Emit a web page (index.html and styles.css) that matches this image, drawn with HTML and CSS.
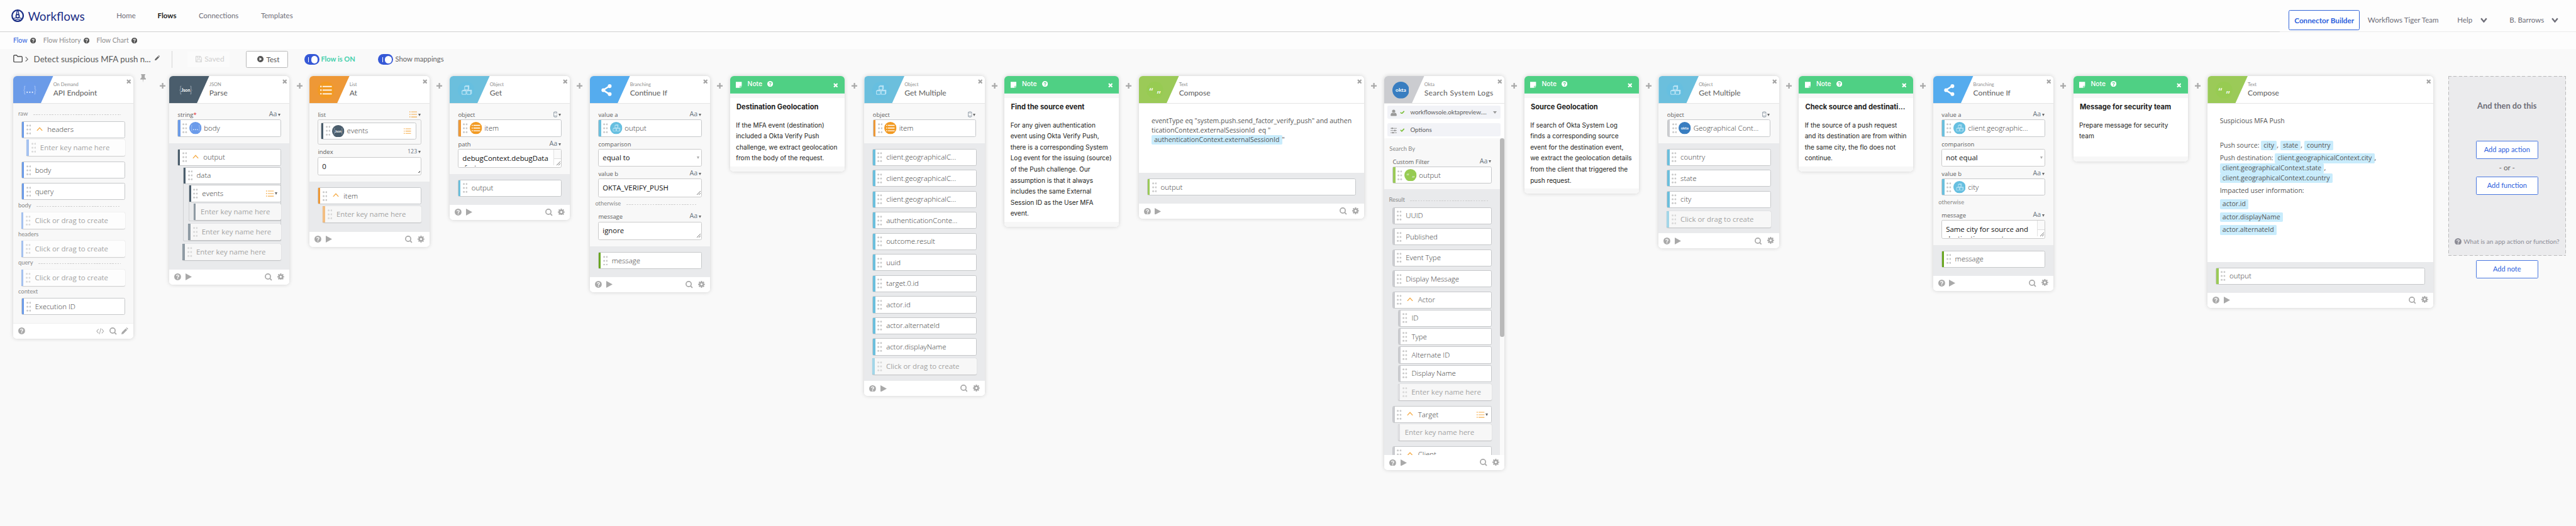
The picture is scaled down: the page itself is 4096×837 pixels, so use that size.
FILE: index.html
```html
<!DOCTYPE html>
<html lang="en">
<head>
<meta charset="utf-8">
<title>Workflows</title>
<link rel="stylesheet" href="styles.css">
</head>
<body>
<svg class="defs" width="0" height="0" aria-hidden="true">
  <symbol id="dots" viewBox="0 0 9 19"><g fill="#c9c9c9"><circle cx="1.9" cy="2.1" r="1.8"/><circle cx="7.2" cy="2.1" r="1.8"/><circle cx="1.9" cy="9.5" r="1.8"/><circle cx="7.2" cy="9.5" r="1.8"/><circle cx="1.9" cy="16.9" r="1.8"/><circle cx="7.2" cy="16.9" r="1.8"/></g></symbol>
  <symbol id="up" viewBox="0 0 12 8"><path d="M1 7 6 1.5 11 7" fill="none" stroke="#f6ae4c" stroke-width="1.7"/></symbol>
  <symbol id="list" viewBox="0 0 15 12"><path d="M3.5 1.2H15M3.5 6H15M3.5 10.8H15" stroke="#f6ae4c" stroke-width="1.4"/><path d="M0 1.2h1.8M0 6h1.8M0 10.8h1.8" stroke="#f6ae4c" stroke-width="1.8"/></symbol>
  <symbol id="obj" viewBox="0 0 8 12"><path d="M.7 2.2C.7.3 7.3.3 7.3 2.2V9.800C7.300 11.700.7 11.700.7 9.800ZM.7 2.400C1.500 3.600 6.500 3.600 7.300 2.400M.7 9.200H7.300" fill="none" stroke="#8b97a3" stroke-width="1"/></symbol>
  <symbol id="q" viewBox="0 0 14 14"><circle cx="7" cy="7" r="7" fill="currentColor"/><path d="M4.700 5.600C4.700 2.500 9.400 2.700 9.300 5.400 9.200 7 7.100 6.900 7.100 8.600" fill="none" stroke="var(--qbg,#fff)" stroke-width="1.7"/><circle cx="7.100" cy="10.700" r="1.100" fill="var(--qbg,#fff)"/></symbol>
  <symbol id="play" viewBox="0 0 12 13"><path d="M0 0 12 6.500 0 13Z" fill="#a9a9a9"/></symbol>
  <symbol id="mag" viewBox="0 0 14 14"><circle cx="6" cy="6" r="4.900" fill="none" stroke="#a9a9a9" stroke-width="2"/><path d="M9.500 9.500 13.200 13.300" stroke="#a9a9a9" stroke-width="2.200"/></symbol>
  <symbol id="gear" viewBox="0 0 14 14"><circle cx="7" cy="7" r="3.600" fill="none" stroke="#a9a9a9" stroke-width="3"/><path d="M7 0V2.500M7 11.500V14M0 7H2.500M11.500 7H14M2 2 3.800 3.800M10.200 10.200 12 12M12 2 10.200 3.800M3.800 10.200 2 12" stroke="#a9a9a9" stroke-width="2.600"/></symbol>
  <symbol id="x" viewBox="0 0 10 10"><path d="M1.300 1.300 8.700 8.700M8.700 1.300 1.300 8.700" stroke="currentColor" stroke-width="2.800"/></symbol>
  <symbol id="plus" viewBox="0 0 11 11"><path d="M5.500 0V11M0 5.500H11" stroke="#a9a9a9" stroke-width="2.700"/></symbol>
  <symbol id="pencil" viewBox="0 0 12 12"><path d="M0 12 .8 8.600 7.500 1.900 10.100 4.500 3.400 11.200ZM8.300 1.100 9.400 0 12 2.600 10.900 3.700Z" fill="currentColor"/></symbol>
  <symbol id="note" viewBox="0 0 12 12"><path d="M0 0H12V8H8V12H0Z" fill="#fff"/><path d="M9 12V9H12Z" fill="#fff"/></symbol>
  <symbol id="chev" viewBox="0 0 13 10"><path d="M1.300 1.500 6.500 7.800 11.700 1.500" fill="none" stroke="#6e6e78" stroke-width="2.800"/></symbol>
  <symbol id="i-list" viewBox="0 0 32 32"><circle cx="16" cy="16" r="16" fill="#f29a22"/><path d="M9.500 9H27M9.500 16H27M9.500 23H27" stroke="#fff" stroke-width="2.100"/><path d="M5 9h2.600M5 16h2.600M5 23h2.600" stroke="#fff" stroke-width="2.600"/></symbol>
  <symbol id="i-obj" viewBox="0 0 32 32"><circle cx="16" cy="16" r="16" fill="#66bfe0"/><path d="M8 17.500H15.500V24H8ZM17 17.500H24.500V24H17ZM13 9H19.500V15.500H13ZM8 17.500 9.500 16H17M17 17.500 18.500 16H26V22.500L24.500 24M24.500 17.500 26 16M13 9 14.500 7.500H21V14L19.500 15.500M19.500 9 21 7.500" fill="none" stroke="#d6f0fb" stroke-width="1"/></symbol>
  <symbol id="i-json" viewBox="0 0 32 32"><circle cx="16" cy="16" r="16" fill="#4a5d6c"/><path d="M7.500 8.500H6V14.500L4.500 16 6 17.500V23.500H7.500M24.500 8.500H26V14.500L27.500 16 26 17.500V23.500H24.500" fill="none" stroke="#a9b4bd" stroke-width="1"/><text x="16" y="19" text-anchor="middle" font-size="8.500" font-weight="700" fill="#fff" class="st">Json</text></symbol>
  <symbol id="i-api" viewBox="0 0 32 32"><circle cx="16" cy="16" r="16" fill="#6b9bea"/><path d="M7.500 8.500H6V14.500L4.500 16 6 17.500V23.500H7.500M24.500 8.500H26V14.500L27.500 16 26 17.500V23.500H24.500" fill="none" stroke="#b9d0f6" stroke-width="1"/><g fill="#fff"><circle cx="11" cy="20" r="1.200"/><circle cx="16" cy="20" r="1.200"/><circle cx="21" cy="20" r="1.200"/></g></symbol>
  <symbol id="i-text" viewBox="0 0 32 32"><circle cx="16" cy="16" r="16" fill="#97cb52"/><text x="9" y="26" text-anchor="middle" font-size="20" fill="#fff" class="sq">“</text><text x="23.500" y="32" text-anchor="middle" font-size="20" fill="#fff" class="sq">”</text></symbol>
  <symbol id="i-okta" viewBox="0 0 32 32"><circle cx="16" cy="16" r="16" fill="#387dc0"/><text x="16" y="19.500" text-anchor="middle" font-size="10" font-weight="700" fill="#fff" class="st">okta</text></symbol>
  <symbol id="i-branch" viewBox="0 0 32 32"><path d="M22 8 9.500 16 22 24" fill="none" stroke="#fff" stroke-width="3"/><circle cx="22" cy="8.500" r="3.600" fill="#fff"/><circle cx="10" cy="16" r="3.600" fill="#fff"/><circle cx="22" cy="23.500" r="3.600" fill="#fff"/></symbol>
</svg>

<div class="app">
<header class="top">
  <svg class="logo" viewBox="0 0 24 24"><g fill="none" stroke="#1b2f86"><circle cx="12" cy="12" r="10.600" stroke-width="2.700"/><circle cx="12" cy="12.800" r="3.100" stroke-width="2"/><path d="M12 1.500C9.500 3.500 11.500 5 9.300 10.500M12 1.500C14.500 3.500 12.500 5 14.700 10.500M9.500 15C7.500 17.500 5.500 15.500 3.500 18M14.500 15C16.500 17.500 18.500 15.500 20.500 18M7 20.500C9.500 18 14.500 18 17 20.500" stroke-width="1.600"/></g></svg>
  <span class="brand">Workflows</span>
  <nav class="nav"><span class="n1">Home</span><span class="n2">Flows</span><span class="n3">Connections</span><span class="n4">Templates</span></nav>
  <div class="tr">
    <span class="cb">Connector Builder</span><span class="org">Workflows Tiger Team</span><span class="help">Help</span><svg class="chev c1"><use href="#chev"/></svg><span class="user">B. Barrows</span><svg class="chev"><use href="#chev"/></svg>
  </div>
</header>
<div class="tabs"><span class="t1">Flow</span><svg><use href="#q"/></svg><span class="t2">Flow History</span><svg><use href="#q"/></svg><span class="t3">Flow Chart</span><svg><use href="#q"/></svg></div>
<div class="bar">
  <svg class="folder" viewBox="0 0 18 15"><path d="M1 2.500Q1 1 2.500 1H6.500L8.500 3.500H15.500Q17 3.500 17 5V12.500Q17 14 15.500 14H2.500Q1 14 1 12.500Z" fill="none" stroke="#333" stroke-width="1.400"/></svg>
  <svg class="gt" viewBox="0 0 6 10"><path d="M.8.8 5 5 .8 9.200" fill="none" stroke="#666" stroke-width="1.300"/></svg>
  <span class="title">Detect suspicious MFA push n...</span>
  <svg class="pen"><use href="#pencil"/></svg>
  <i class="vr"></i>
  <span class="saved"><svg viewBox="0 0 12 12"><path d="M.6.600H9L11.400 3V11.400H.6ZM3 .6V4H8.500V.6M2.600 11.400V7H9.400V11.400M7 1.500V3" fill="none" stroke="#cfcfcf" stroke-width="1.100"/></svg><b>Saved</b></span>
  <span class="test"><svg viewBox="0 0 12 12"><circle cx="6" cy="6" r="6" fill="#555"/><path d="M4.200 3 9 6 4.200 9Z" fill="#fff"/></svg><b>Test</b></span>
  <span class="tog"><i></i><u></u></span><span class="on">Flow is ON</span>
  <span class="tog t"><i></i><u></u></span><span class="map">Show mappings</span>
</div>

<main class="flow">
<section class="card api">
  <div class="hd"><div class="ic"><svg><use href="#i-api"/></svg></div><div class="tt"><small>On Demand</small><h2>API Endpoint</h2></div><svg class="cl"><use href="#x"/></svg></div>
  <div class="out plain">
    <div class="sec s0"><span>raw</span><i></i></div>
    <div class="it"><svg class="d"><use href="#dots"/></svg><svg class="up"><use href="#up"/></svg><span>headers</span></div>
    <div class="ph k"><svg class="d"><use href="#dots"/></svg><span>Enter key name here</span></div>
    <div class="it g1"><svg class="d"><use href="#dots"/></svg><span>body</span></div>
    <div class="it g2"><svg class="d"><use href="#dots"/></svg><span>query</span></div>
    <div class="sec"><span>body</span><i></i></div>
    <div class="ph"><svg class="d"><use href="#dots"/></svg><span>Click or drag to create</span></div>
    <div class="sec"><span>headers</span><i></i></div>
    <div class="ph"><svg class="d"><use href="#dots"/></svg><span>Click or drag to create</span></div>
    <div class="sec"><span>query</span><i></i></div>
    <div class="ph"><svg class="d"><use href="#dots"/></svg><span>Click or drag to create</span></div>
    <div class="sec"><span>context</span><i></i></div>
    <div class="it"><svg class="d"><use href="#dots"/></svg><span>Execution ID</span></div>
  </div>
  <div class="ft"><svg class="q"><use href="#q"/></svg><svg class="code" viewBox="0 0 15 12"><path d="M4.500 2 1 6 4.500 10M10.500 2 14 6 10.500 10M8.800.5 6.200 11.500" fill="none" stroke="#a9a9a9" stroke-width="1.200"/></svg><svg class="mag"><use href="#mag"/></svg><svg class="pc"><use href="#pencil"/></svg></div>
</section>
<div class="gap first"><svg class="pin" viewBox="0 0 11 16"><path d="M1.500 0H9.500V1.800H8.500V6.500Q11 7.500 11 10H6.100L5.500 16 4.900 10H0Q0 7.500 2.500 6.500V1.800H1.500Z" fill="#a9a9a9"/></svg><svg class="p"><use href="#plus"/></svg></div>

<section class="card json">
  <div class="hd"><div class="ic"><svg><use href="#i-json"/></svg></div><div class="tt"><small>JSON</small><h2>Parse</h2></div><svg class="cl"><use href="#x"/></svg></div>
  <div class="in">
    <div class="lb"><span>string<em>*</em></span><b>Aa</b></div>
    <div class="it c-api"><svg class="d"><use href="#dots"/></svg><svg class="ci"><use href="#i-api"/></svg><span>body</span></div>
  </div>
  <div class="out tall">
    <div class="it"><svg class="d"><use href="#dots"/></svg><svg class="up"><use href="#up"/></svg><span>output</span></div>
    <div class="nest">
      <div class="it"><svg class="d"><use href="#dots"/></svg><span>data</span></div>
      <div class="nest">
        <div class="it"><svg class="d"><use href="#dots"/></svg><span>events</span><svg class="ls r"><use href="#list"/></svg><i class="dn"></i></div>
        <div class="ph k nd"><span>Enter key name here</span></div>
      </div>
      <div class="ph k"><svg class="d"><use href="#dots"/></svg><span>Enter key name here</span></div>
    </div>
    <div class="ph k k4"><svg class="d"><use href="#dots"/></svg><span>Enter key name here</span></div>
  </div>
  <div class="ft"><svg class="q"><use href="#q"/></svg><svg class="play"><use href="#play"/></svg><svg class="mag"><use href="#mag"/></svg><svg class="gear"><use href="#gear"/></svg></div>
</section>
<div class="gap"><svg class="p"><use href="#plus"/></svg></div>

<section class="card list">
  <div class="hd"><div class="ic"><svg><use href="#i-list"/></svg></div><div class="tt"><small>List</small><h2>At</h2></div><svg class="cl"><use href="#x"/></svg></div>
  <div class="in">
    <div class="lb"><span>list</span><svg class="ls"><use href="#list"/></svg></div>
    <div class="lbox"><div class="it c-json"><svg class="d"><use href="#dots"/></svg><svg class="ci"><use href="#i-json"/></svg><span>events</span><svg class="ls r r2"><use href="#list"/></svg></div></div>
    <div class="lb n"><span>index</span><b class="num">123</b></div>
    <div class="ta"><span>0</span></div>
  </div>
  <div class="out low">
    <div class="it"><svg class="d"><use href="#dots"/></svg><svg class="up"><use href="#up"/></svg><span>item</span></div>
    <div class="ph k"><svg class="d"><use href="#dots"/></svg><span>Enter key name here</span></div>
  </div>
  <div class="ft"><svg class="q"><use href="#q"/></svg><svg class="play"><use href="#play"/></svg><svg class="mag"><use href="#mag"/></svg><svg class="gear"><use href="#gear"/></svg></div>
</section>
<div class="gap"><svg class="p"><use href="#plus"/></svg></div>

<section class="card obj">
  <div class="hd"><div class="ic"><svg><use href="#i-obj"/></svg></div><div class="tt"><small>Object</small><h2>Get</h2></div><svg class="cl"><use href="#x"/></svg></div>
  <div class="in">
    <div class="lb"><span>object</span><svg class="ob"><use href="#obj"/></svg></div>
    <div class="it c-list"><svg class="d"><use href="#dots"/></svg><svg class="ci"><use href="#i-list"/></svg><span>item</span></div>
    <div class="lb n"><span>path</span><b>Aa</b></div>
    <div class="ta sc"><span>debugContext.debugData<br>.factor</span><i></i></div>
  </div>
  <div class="out">
    <div class="it"><svg class="d"><use href="#dots"/></svg><span>output</span></div>
  </div>
  <div class="ft"><svg class="q"><use href="#q"/></svg><svg class="play"><use href="#play"/></svg><svg class="mag"><use href="#mag"/></svg><svg class="gear"><use href="#gear"/></svg></div>
</section>
<div class="gap"><svg class="p"><use href="#plus"/></svg></div>

<section class="card br">
  <div class="hd"><div class="ic"><svg><use href="#i-branch"/></svg></div><div class="tt"><small>Branching</small><h2>Continue If</h2></div><svg class="cl"><use href="#x"/></svg></div>
  <div class="in">
    <div class="lb"><span>value a</span><b>Aa</b></div>
    <div class="it c-obj"><svg class="d"><use href="#dots"/></svg><svg class="ci"><use href="#i-obj"/></svg><span>output</span></div>
    <div class="lb n nx"><span>comparison</span></div>
    <div class="sel"><span>equal to</span></div>
    <div class="lb n"><span>value b</span><b>Aa</b></div>
    <div class="ta"><span>OKTA_VERIFY_PUSH</span></div>
    <div class="sec so"><span>otherwise</span><i></i></div>
    <div class="lb"><span>message</span><b>Aa</b></div>
    <div class="ta"><span>ignore</span></div>
  </div>
  <div class="out">
    <div class="it c-msg"><svg class="d"><use href="#dots"/></svg><span>message</span></div>
  </div>
  <div class="ft"><svg class="q"><use href="#q"/></svg><svg class="play"><use href="#play"/></svg><svg class="mag"><use href="#mag"/></svg><svg class="gear"><use href="#gear"/></svg></div>
</section>
<div class="gap"><svg class="p"><use href="#plus"/></svg></div>

<section class="card note">
  <div class="nh"><svg class="ni"><use href="#note"/></svg><span>Note</span><svg class="nq"><use href="#q"/></svg><svg class="nx2"><use href="#x"/></svg></div>
  <div class="nb"><h3>Destination Geolocation</h3><p>If the MFA event (destination)<br>included a Okta Verify Push<br>challenge, we extract geolocation<br>from the body of the request.</p></div>
</section>
<div class="gap"><svg class="p"><use href="#plus"/></svg></div>

<section class="card obj">
  <div class="hd"><div class="ic"><svg><use href="#i-obj"/></svg></div><div class="tt"><small>Object</small><h2>Get Multiple</h2></div><svg class="cl"><use href="#x"/></svg></div>
  <div class="in">
    <div class="lb"><span>object</span><svg class="ob"><use href="#obj"/></svg></div>
    <div class="it c-list"><svg class="d"><use href="#dots"/></svg><svg class="ci"><use href="#i-list"/></svg><span>item</span></div>
  </div>
  <div class="out multi">
    <div class="it"><svg class="d"><use href="#dots"/></svg><span>client.geographicalC...</span></div>
    <div class="it"><svg class="d"><use href="#dots"/></svg><span>client.geographicalC...</span></div>
    <div class="it"><svg class="d"><use href="#dots"/></svg><span>client.geographicalC...</span></div>
    <div class="it"><svg class="d"><use href="#dots"/></svg><span>authenticationConte...</span></div>
    <div class="it"><svg class="d"><use href="#dots"/></svg><span>outcome.result</span></div>
    <div class="it"><svg class="d"><use href="#dots"/></svg><span>uuid</span></div>
    <div class="it"><svg class="d"><use href="#dots"/></svg><span>target.0.id</span></div>
    <div class="it"><svg class="d"><use href="#dots"/></svg><span>actor.id</span></div>
    <div class="it"><svg class="d"><use href="#dots"/></svg><span>actor.alternateId</span></div>
    <div class="it"><svg class="d"><use href="#dots"/></svg><span>actor.displayName</span></div>
    <div class="ph"><svg class="d"><use href="#dots"/></svg><span>Click or drag to create</span></div>
  </div>
  <div class="ft"><svg class="q"><use href="#q"/></svg><svg class="play"><use href="#play"/></svg><svg class="mag"><use href="#mag"/></svg><svg class="gear"><use href="#gear"/></svg></div>
</section>
<div class="gap"><svg class="p"><use href="#plus"/></svg></div>

<section class="card note">
  <div class="nh"><svg class="ni"><use href="#note"/></svg><span>Note</span><svg class="nq"><use href="#q"/></svg><svg class="nx2"><use href="#x"/></svg></div>
  <div class="nb"><h3>Find the source event</h3><p>For any given authentication<br>event using Okta Verify Push,<br>there is a corresponding System<br>Log event for the issuing (source)<br>of the Push challenge. Our<br>assumption is that it always<br>includes the same External<br>Session ID as the User MFA<br>event.</p></div>
</section>
<div class="gap"><svg class="p"><use href="#plus"/></svg></div>

<section class="card text">
  <div class="hd"><div class="ic"><svg><use href="#i-text"/></svg></div><div class="tt"><small>Text</small><h2>Compose</h2></div><svg class="cl"><use href="#x"/></svg></div>
  <div class="comp cm1"><div>eventType eq "system.push.send_factor_verify_push" and authen</div><div>ticationContext.externalSessionId&nbsp; eq "</div><div><mark>authenticationContext.externalSessionId</mark>"</div></div>
  <div class="out">
    <div class="it"><svg class="d"><use href="#dots"/></svg><span>output</span></div>
  </div>
  <div class="ft"><svg class="q"><use href="#q"/></svg><svg class="play"><use href="#play"/></svg><svg class="mag"><use href="#mag"/></svg><svg class="gear"><use href="#gear"/></svg></div>
</section>
<div class="gap"><svg class="p"><use href="#plus"/></svg></div>

<section class="card okta">
  <div class="hd"><div class="ic"><svg><use href="#i-okta"/></svg></div><div class="tt"><small>Okta</small><h2>Search System Logs</h2></div><svg class="cl"><use href="#x"/></svg></div>
  <div class="opts">
    <div class="op"><svg class="oi" viewBox="0 0 13 13"><circle cx="6.500" cy="3.400" r="3.300" fill="#999"/><path d="M1 13Q0 13 .3 10.500 1 6.500 3.800 6.500 6.500 8.300 9.200 6.500 12 6.500 12.700 10.500 13 13 12 13Z" fill="#999"/></svg><svg class="ok" viewBox="0 0 9 7"><path d="M1 3.300 3.500 5.700 8 1" fill="none" stroke="#7cbf3a" stroke-width="2"/></svg><span>workflowsoie.oktapreview....</span><i class="dd"></i></div>
    <div class="op"><svg class="oi" viewBox="0 0 13 13"><path d="M0 2.300H13M0 6.800H13M0 11.300H13" stroke="#8a8a8a" stroke-width="1.100"/><path d="M3.500.8V3.800M9 5.300V8.300M5 9.800V12.800" stroke="#8a8a8a" stroke-width="2.400"/></svg><svg class="ok" viewBox="0 0 9 7"><path d="M1 3.300 3.500 5.700 8 1" fill="none" stroke="#7cbf3a" stroke-width="2"/></svg><span>Options</span></div>
  </div>
  <div class="scroll">
    <div class="pane">
      <div class="in">
        <div class="sec s1"><span>Search By</span><i></i></div>
        <div class="lb"><span>Custom Filter</span><b>Aa</b></div>
        <div class="it c-text"><svg class="d"><use href="#dots"/></svg><svg class="ci"><use href="#i-text"/></svg><span>output</span></div>
      </div>
      <div class="out multi">
        <div class="sec s2"><span>Result</span><i></i></div>
        <div class="it"><svg class="d"><use href="#dots"/></svg><span>UUID</span></div>
        <div class="it"><svg class="d"><use href="#dots"/></svg><span>Published</span></div>
        <div class="it"><svg class="d"><use href="#dots"/></svg><span>Event Type</span></div>
        <div class="it"><svg class="d"><use href="#dots"/></svg><span>Display Message</span></div>
        <div class="it"><svg class="d"><use href="#dots"/></svg><svg class="up"><use href="#up"/></svg><span>Actor</span></div>
        <div class="kids">
          <div class="it"><svg class="d"><use href="#dots"/></svg><span>ID</span></div>
          <div class="it"><svg class="d"><use href="#dots"/></svg><span>Type</span></div>
          <div class="it"><svg class="d"><use href="#dots"/></svg><span>Alternate ID</span></div>
          <div class="it"><svg class="d"><use href="#dots"/></svg><span>Display Name</span></div>
          <div class="ph"><svg class="d"><use href="#dots"/></svg><span>Enter key name here</span></div>
        </div>
        <div class="it t10"><svg class="d"><use href="#dots"/></svg><svg class="up"><use href="#up"/></svg><span>Target</span><svg class="ls r"><use href="#list"/></svg><i class="dn"></i></div>
        <div class="kids"><div class="ph nd"><span>Enter key name here</span></div></div>
        <div class="it t10"><svg class="d"><use href="#dots"/></svg><svg class="up"><use href="#up"/></svg><span>Client</span></div>
      </div>
    </div>
    <div class="sb"><i></i></div>
  </div>
  <div class="ft"><svg class="q"><use href="#q"/></svg><svg class="play"><use href="#play"/></svg><svg class="mag"><use href="#mag"/></svg><svg class="gear"><use href="#gear"/></svg></div>
</section>
<div class="gap"><svg class="p"><use href="#plus"/></svg></div>

<section class="card note">
  <div class="nh"><svg class="ni"><use href="#note"/></svg><span>Note</span><svg class="nq"><use href="#q"/></svg><svg class="nx2"><use href="#x"/></svg></div>
  <div class="nb"><h3>Source Geolocation</h3><p>If search of Okta System Log<br>finds a corresponding source<br>event for the destination event,<br>we extract the geolocation details<br>from the client that triggered the<br>push request.</p></div>
</section>
<div class="gap"><svg class="p"><use href="#plus"/></svg></div>

<section class="card obj">
  <div class="hd"><div class="ic"><svg><use href="#i-obj"/></svg></div><div class="tt"><small>Object</small><h2>Get Multiple</h2></div><svg class="cl"><use href="#x"/></svg></div>
  <div class="in">
    <div class="lb"><span>object</span><svg class="ob"><use href="#obj"/></svg></div>
    <div class="it c-okta"><svg class="d"><use href="#dots"/></svg><svg class="ci"><use href="#i-okta"/></svg><span>Geographical Cont...</span></div>
  </div>
  <div class="out multi">
    <div class="it"><svg class="d"><use href="#dots"/></svg><span>country</span></div>
    <div class="it"><svg class="d"><use href="#dots"/></svg><span>state</span></div>
    <div class="it"><svg class="d"><use href="#dots"/></svg><span>city</span></div>
    <div class="ph"><svg class="d"><use href="#dots"/></svg><span>Click or drag to create</span></div>
  </div>
  <div class="ft"><svg class="q"><use href="#q"/></svg><svg class="play"><use href="#play"/></svg><svg class="mag"><use href="#mag"/></svg><svg class="gear"><use href="#gear"/></svg></div>
</section>
<div class="gap"><svg class="p"><use href="#plus"/></svg></div>

<section class="card note">
  <div class="nh"><svg class="ni"><use href="#note"/></svg><span>Note</span><svg class="nq"><use href="#q"/></svg><svg class="nx2"><use href="#x"/></svg></div>
  <div class="nb"><h3>Check source and destinati...</h3><p>If the source of a push request<br>and its destination are from within<br>the same city, the flo does not<br>continue.</p></div>
</section>
<div class="gap"><svg class="p"><use href="#plus"/></svg></div>

<section class="card br">
  <div class="hd"><div class="ic"><svg><use href="#i-branch"/></svg></div><div class="tt"><small>Branching</small><h2>Continue If</h2></div><svg class="cl"><use href="#x"/></svg></div>
  <div class="in">
    <div class="lb"><span>value a</span><b>Aa</b></div>
    <div class="it c-obj"><svg class="d"><use href="#dots"/></svg><svg class="ci"><use href="#i-obj"/></svg><span>client.geographic...</span></div>
    <div class="lb n nx"><span>comparison</span></div>
    <div class="sel"><span>not equal</span></div>
    <div class="lb n"><span>value b</span><b>Aa</b></div>
    <div class="it c-obj"><svg class="d"><use href="#dots"/></svg><svg class="ci"><use href="#i-obj"/></svg><span>city</span></div>
    <div class="sec so"><span>otherwise</span><i></i></div>
    <div class="lb"><span>message</span><b>Aa</b></div>
    <div class="ta sc"><span>Same city for source and<br>destination event</span><i></i></div>
  </div>
  <div class="out">
    <div class="it c-msg"><svg class="d"><use href="#dots"/></svg><span>message</span></div>
  </div>
  <div class="ft"><svg class="q"><use href="#q"/></svg><svg class="play"><use href="#play"/></svg><svg class="mag"><use href="#mag"/></svg><svg class="gear"><use href="#gear"/></svg></div>
</section>
<div class="gap"><svg class="p"><use href="#plus"/></svg></div>

<section class="card note">
  <div class="nh"><svg class="ni"><use href="#note"/></svg><span>Note</span><svg class="nq"><use href="#q"/></svg><svg class="nx2"><use href="#x"/></svg></div>
  <div class="nb n5"><h3>Message for security team</h3><p>Prepare message for security<br>team</p></div>
</section>
<div class="gap"><svg class="p"><use href="#plus"/></svg></div>

<section class="card text">
  <div class="hd"><div class="ic"><svg><use href="#i-text"/></svg></div><div class="tt"><small>Text</small><h2>Compose</h2></div><svg class="cl"><use href="#x"/></svg></div>
  <div class="comp cm2">
    <div class="m1">Suspicious MFA Push</div>
    <div class="m2">Push source: <mark>city</mark>, <mark>state</mark>, <mark>country</mark></div>
    <div class="m3">Push destination: <mark>client.geographicalContext.city</mark>,</div>
    <div><mark>client.geographicalContext.state</mark>,</div>
    <div><mark>client.geographicalContext.country</mark></div>
    <div class="m4">Impacted user information:</div>
    <div class="m5"><mark>actor.id</mark></div>
    <div class="m5"><mark>actor.displayName</mark></div>
    <div class="m5"><mark>actor.alternateId</mark></div>
  </div>
  <div class="out">
    <div class="it"><svg class="d"><use href="#dots"/></svg><span>output</span></div>
  </div>
  <div class="ft"><svg class="q"><use href="#q"/></svg><svg class="play"><use href="#play"/></svg><svg class="mag"><use href="#mag"/></svg><svg class="gear"><use href="#gear"/></svg></div>
</section>

<div class="end">
  <div class="drop">
    <h4>And then do this</h4>
    <span class="btn">Add app action</span>
    <span class="or">- or -</span>
    <span class="btn">Add function</span>
    <span class="what"><svg><use href="#q"/></svg><b>What is an app action or function?</b></span>
  </div>
  <span class="btn an">Add note</span>
</div>
</main>
</div>
</body>
</html>
```

FILE: styles.css
```css
* { box-sizing: border-box; }
body { margin: 0; background: #f9f9f9; overflow: hidden; }
.defs { display: none; }
.app { width: 4886px; height: 998px; zoom: 0.8383; font-family: Lato, sans-serif; color: #666; }
h2, h3, h4, p, small { margin: 0; font-weight: 400; }
svg { display: block; flex: none; }
span, b { white-space: nowrap; }
b { font-weight: 400; }
.st { font-family: Lato, sans-serif; }
.sq { font-family: "Open Sans", sans-serif; }

/* top navigation */
.top { display: flex; height: 61px; background: #fdfdfd; border: solid #d2d2d2; border-width: 0 0 1px; border-image: linear-gradient(90deg, #d2d2d2 88.480%, #ebebeb 88.480%) 1; padding-left: 21px; }
.logo { width: 24px; height: 24px; margin-top: 18px; }
.brand { margin: 15px 0 0 8px; width: 168px; font-size: 22.500px; line-height: 30px; color: #1b2f86; }
.nav { display: flex; font-size: 13.700px; line-height: 20px; padding-top: 20px; color: #6e6e78; }
.n1 { width: 78px; }
.n2 { width: 78px; color: #1d1d21; font-weight: 700; }
.n3 { width: 118px; }
.tr { display: flex; margin-left: auto; padding: 19px 33px 0 0; font-size: 13.800px; line-height: 38px; color: #6e6e78; }
.cb { width: 135px; height: 38px; line-height: 36px; border: 1px solid #3264d8; border-radius: 3px; background: #fff; color: #2d5fdd; font-size: 14px; font-weight: 700; text-align: center; margin-right: 15px; }
.org { width: 170px; }
.help { width: 44px; }
.chev { width: 13px; height: 10px; margin-top: 14px; }
.c1 { margin-right: 42px; }
.user { width: 80px; }

/* tabs */
.tabs { display: flex; align-items: center; height: 32px; background: #fdfdfd; padding: 0 0 2px 25px; font-size: 12.700px; color: #8f8f8f; }
.tabs svg { width: 11px; height: 11px; color: #555; margin: 1px 14px 0 5px; }
.t1 { color: #2d5fdd; }

/* toolbar */
.bar { display: flex; height: 51px; padding: 4px 0 0 25px; align-items: flex-start; line-height: 32px; }
.folder { width: 18px; height: 15px; margin-top: 7px; }
.gt { width: 6px; height: 10px; margin: 10px 10px 0 5px; }
.title { font-size: 15.900px; width: 229px; color: #5a5a5a; }
.pen { width: 10px; height: 10px; margin: 8px 0 0; color: #666; }
.vr { width: 1px; height: 32px; background: #d5d5d5; margin: 0 29px 0 23px; }
.saved { display: flex; width: 80px; height: 30px; margin-top: 1px; background: #fbfbfb; line-height: 29px; font-size: 14.400px; color: #cfcfcf; padding-left: 15px; }
.saved svg, .test svg { width: 12px; height: 12px; margin: 8px 5px 0 0; }
.test { display: flex; width: 80px; height: 32px; margin-left: 31px; background: #fff; border: 1px solid #b9b9b9; border-radius: 3px; line-height: 29px; font-size: 14px; color: #555; padding-left: 20px; }
.tog { display: flex; width: 29px; height: 20px; border-radius: 10px; background: #3558d6; margin: 6px 3px 0 30px; padding: 3px; }
.tog i { width: 1.500px; height: 9px; background: #fff; margin: 3px 5px 0 5px; }
.tog u { width: 14px; height: 14px; border-radius: 7px; background: #fff; margin-left: -1px; }
.on { font-size: 13.200px; line-height: 31px; color: #43d0ac; font-weight: 700; width: 68px; }
.tog.t { margin-left: 40px; }
.map { font-size: 13.400px; line-height: 31px; margin-left: 1px; }

/* cards */
.flow { display: flex; align-items: flex-start; padding-left: 25px; height: 854px; }
.card { --c: #aaa; flex: none; width: 228px; border-radius: 7px; overflow: hidden; background: #fff; box-shadow: 0 0 7px rgba(0,0,0,.17); }
.api, .c-api { --c: #6b9be8; }
.json, .c-json { --c: #4a5d6c; }
.list, .c-list { --c: #ee9836; }
.obj, .c-obj { --c: #6bbfdd; }
.br { --c: #55acee; }
.text, .c-text { --c: #9bca58; }
.okta, .c-okta { --c: #cbccd0; }
.c-msg { --c: #6aa722; }
.text { width: 427.300px; }
.note { width: 216.700px; }
.gap { flex: none; width: 38px; height: 37.400px; display: flex; align-items: center; justify-content: center; }
.p { width: 11px; height: 11px; }
.first { width: 68px; }
.pin { width: 11px; height: 16px; margin: -28px 26px 0 6px; }
.hd { display: flex; height: 53px; border-bottom: 1px solid #e4e4e4; background: #fff; }
.ic { width: 76px; height: 52px; background: var(--c); clip-path: polygon(0 0, 76px 0, 52.500px 100%, 0 100%); }
.ic svg { width: 32px; height: 32px; margin: 11px 0 0 15px; }
.tt { flex: 1; }
.tt small { display: block; font-size: 9px; line-height: 12px; color: #8f8f8f; margin-top: 11px; }
.tt h2 { font-size: 14.400px; line-height: 18px; color: #5c5c5c; white-space: nowrap; }
.okta h2 { letter-spacing: .4px; }
.cl { width: 9px; height: 9px; margin: 6px 4px 0 0; color: #a3a3a3; }
.in { background: #f8f8f8; padding: 12px 16px; }
.lb { display: flex; align-items: center; height: 18.300px; font: 11.250px/18px "Open Sans", sans-serif; color: #5c5c5c; padding-right: 1px; }
.lb span { flex: 1; }
.lb em { color: #d22; font-style: normal; }
.lb b { font-size: 12.700px; color: #68747f; margin-top: -2px; }
.lb .num { font-size: 10.600px; }
.lb::after, .dn { content: ""; flex: none; border: 3px solid transparent; border-top: 5px solid #666; border-bottom: 0; margin-left: 2px; }
.lb.nx::after { display: none; }
.lb.n { margin-top: 5.300px; }
.ls { width: 15px; height: 12px; margin-bottom: 2px; }
.ls.r { margin: 0 0 0 auto; }
.ls.r2 { margin-right: 9px; height: 11px; width: 14px; }
.ls + .dn { margin-right: 6px; }
.ob { width: 8px; height: 12px; margin-bottom: 2px; }
.it, .ph { position: relative; display: flex; align-items: center; height: 32.400px; border: 1px solid #c6c8ca; border-radius: 3px; background: #fff; font: 300 13.650px/18px "Open Sans", sans-serif; color: #3c3c3c; padding-left: 8px; }
.it::before, .ph::before { content: ""; position: absolute; left: 0; top: 0; bottom: 0; width: 4px; background: var(--c); }
.it span, .ph span { margin-bottom: 1px; }
.ph { height: 31px; border: 0; background: #f7f7f7; font-weight: 400; color: #a3a3a3; box-shadow: 0 1px 1.500px rgba(0,0,0,.18); padding-left: 9px; }
.ph::before { opacity: .6; }
.ph .d { opacity: .65; }
.nd { padding-left: 13px; }
.d { width: 9px; height: 19px; margin-right: 7.700px; }
.up { width: 12px; height: 8px; margin: 0 8.700px 3px 2.600px; }
.ci { width: 23.300px; height: 23.300px; margin: 0 4.400px 0 -3.700px; }
.lbox { height: 47px; border: 1px solid #cfcfcf; border-radius: 3px; padding: 4px 8px 0 4px; }
.ta, .sel { position: relative; height: 35px; border: 1px solid #cbcbcb; border-radius: 3px; background: #fff; overflow: hidden; font: 13.600px/18px "Open Sans", sans-serif; color: #111; padding: 7px 0 0 7px; }
.ta::after { content: ""; position: absolute; right: 1px; bottom: 3px; width: 7px; height: 7px; background: linear-gradient(135deg, transparent 46%, #777 46%, #777 54%, transparent 54%, transparent 72%, #777 72%, #777 82%, transparent 82%); }
.ta span { display: block; height: 25px; overflow: hidden; }
.ta.sc i { position: absolute; right: 0; top: 0; bottom: 3px; width: 14px; border-left: 1px solid #e2e2e2; background: linear-gradient(#fafafa 17px, #dedede 17px, #dedede 18px, #fff 18px); }
.sel { height: 32.400px; padding-top: 6px; }
.sel::after { content: ""; position: absolute; right: 3px; top: 13px; border: 3px solid transparent; border-top: 5px solid #aaa; border-bottom: 0; }
.sec { display: flex; align-items: center; height: 18px; font: 11.200px/18px Lato, sans-serif; color: #888; margin: 1.500px 9px 3.800px -6px; gap: 10px; }
.sec i { flex: 1; height: 1px; margin-top: 4px; background: repeating-linear-gradient(90deg, #cfcfcf 0 3px, transparent 3px 5px); }
.sec.s0 { margin: 0 9px 5px -6px; }
.sec.so { margin: 2.800px 8px 7.300px -6px; }
.out { background: #e9eaec; padding: 10.800px 15.500px 15.300px; }
.plain { background: #f8f8f8; padding: 10px 15.500px 15px; border-bottom: 1px solid #eee; }
.plain .ph { background: #fdfdfd; }
.k { margin: 2.800px 0 0 10px; }
.nest { margin: 2px 0 0 10.500px; box-shadow: inset 0 0 0 1px #c9cbcd; padding-bottom: 3px; border-radius: 3px; }
.nest + .k4, .nest + .k { margin-top: 4px; }
.g1 { margin-top: 10.800px; }
.g2 { margin-top: 7.800px; }
.tall, .low { padding-bottom: 18.300px; }
.multi { padding-bottom: 11.500px; }
.multi > .it + .it { margin-top: 7.600px; }
.multi > .it + .ph { margin-top: 5.800px; }
.ft { display: flex; align-items: center; height: 28.700px; padding: 0 9.500px; background: #fff; color: #a9a9a9; }
.q { width: 13px; height: 13px; margin-right: 8px; }
.play { width: 12px; height: 13px; }
.mag { width: 14px; height: 14px; margin-left: auto; }
.gear { width: 13px; height: 13px; margin: 0 0 2px 10px; }
.code { width: 15px; height: 12px; margin-left: auto; margin-right: 10px; }
.code + .mag { margin-left: 0; }
.pc { width: 13px; height: 13px; margin-left: 9px; }

/* notes */
.nh { display: flex; height: 34px; background: #4fd084; color: #fff; border-bottom: 1px solid #6fdaa0; }
.ni { width: 11.500px; height: 12px; margin: 11px 10.500px 0 11px; }
.nh span { font: 500 12.300px/18px Inter, sans-serif; margin: 6.500px 0 0; width: 38px; }
.nq { --qbg: #4fd084; width: 11px; height: 11px; margin-top: 10px; }
.nx2 { width: 9px; height: 9px; margin: 13px 12px 0 auto; }
.nb { background: #fff; border: solid #f7f7f7; border-width: 9px 0 9.700px; padding: 7px 0 4.500px 11px; min-height: 128px; color: #1d1d21; font-family: Inter, sans-serif; }
.nb h3 { font-size: 13.300px; font-weight: 700; line-height: 21px; padding-left: 1px; white-space: nowrap; }
.nb p { font-size: 12.100px; line-height: 21px; margin-top: 13px; white-space: nowrap; }

/* composed text */
.comp { background: #fff; padding-left: 24px; font: 12.550px/17.500px "Open Sans", sans-serif; color: #555; white-space: nowrap; }
mark { background: #c9ecfc; color: inherit; padding: 0 5px; border-radius: 2px; display: inline-block; height: 18.700px; line-height: 18.700px; }
.cm1 { height: 131px; padding-top: 24px; }
.cm2 { height: 300px; padding: 24px 0 0 23px; line-height: 18.700px; }
.m2 { margin-top: 27px; }
.m3 { margin-top: 6px; }
.m4 { margin: 6px 0; }
.m5 { margin-bottom: 6px; }

/* search card */
.opts { height: 66px; padding: 3.500px 7px 0 6.500px; background: #fff; }
.op { display: flex; height: 25.500px; background: #f2f3f7; border-radius: 3px; margin-bottom: 8px; font: 11.600px/24px Lato, sans-serif; color: #5c5c5c; padding-left: 6px; }
.oi { width: 12px; height: 13px; margin-top: 7px; }
.ok { width: 9px; height: 7px; margin: 9px 10px 0 6px; }
.dd { margin: 11px 7px 0 auto; border: 4px solid transparent; border-top: 5px solid #999; border-bottom: 0; height: 0; }
.scroll { display: flex; height: 600.700px; overflow: hidden; }
.pane { width: 220px; }
.pane .in { padding: 10px 16px 11px; }
.sec.s1 { margin: 0 9px 7px -6px; }
.sec.s2 { margin: 0 7px 5px -6px; }
.pane .out { padding-left: 15px; }
.kids { display: grid; gap: 2.700px; margin: 2px 0 0 11px; }
.kids .it + .ph { margin-top: 1px; }
.t10 { margin-top: 10.700px; }
.sb { width: 8px; background: #fafafa; }
.sb i { display: block; height: 377px; border-radius: 4px; background: #b9b9b9; }

/* end of flow */
.end { margin-left: 28.900px; width: 223px; display: flex; flex-direction: column; align-items: center; }
.drop { width: 223px; height: 341px; margin-top: .5px; background: repeating-linear-gradient(90deg, #bbb 0 6px, transparent 6px 10px) 0 0/100% 1.300px no-repeat, repeating-linear-gradient(90deg, #bbb 0 6px, transparent 6px 10px) 0 100%/100% 1.300px no-repeat, repeating-linear-gradient(#bbb 0 6px, transparent 6px 10px) 0 0/1.300px 100% no-repeat, repeating-linear-gradient(#bbb 0 6px, transparent 6px 10px) 100% 0/1.300px 100% no-repeat, #ebebed; display: flex; flex-direction: column; align-items: center; }
.drop h4 { font-size: 15.300px; line-height: 20px; font-weight: 700; color: #6e6e78; margin: 47px 0 56px; white-space: nowrap; }
.btn { width: 118.500px; height: 34.700px; border: 1px solid #4a78e0; border-radius: 2px; background: #fff; color: #2d5fdd; font-size: 13.200px; line-height: 32px; text-align: center; }
.or { font-size: 14px; line-height: 20px; margin: 6px 0 7.300px; }
.what { display: flex; align-items: center; margin-top: 79px; font-size: 12.100px; line-height: 20px; color: #8c8c96; }
.what svg { width: 13px; height: 13px; margin: 0 4px 2px 0; --qbg: #ebebed; }
.an { margin-top: 8.500px; }
.nb.n5 { min-height: 128.300px; }
```
